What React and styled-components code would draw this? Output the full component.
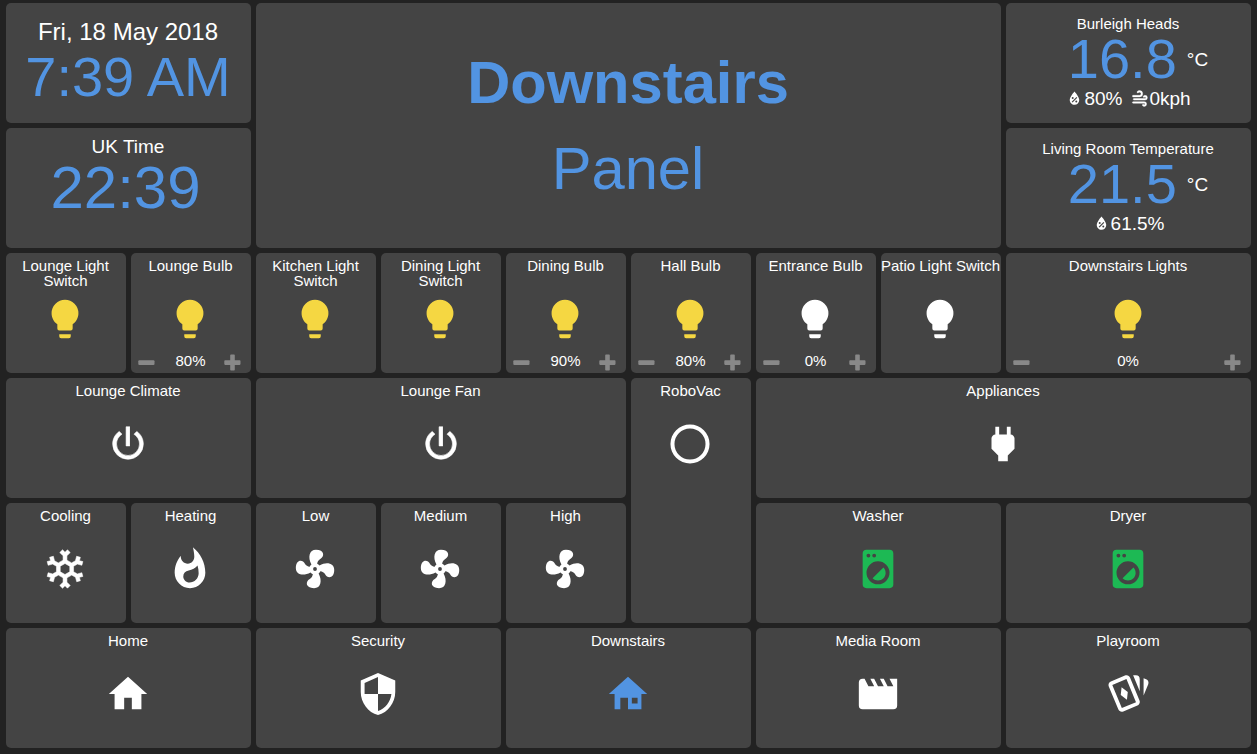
import React from "react";
import styled, { createGlobalStyle } from "styled-components";

const GlobalStyle = createGlobalStyle`
  body {
    margin: 0;
    background: #222;
    color: #fff;
    font-family: "Liberation Sans", Arial, sans-serif;
    overflow: hidden;
  }
`;

const BLUE = "#5294e2";
const YELLOW = "#f5d742";
const GREEN = "#1db954";

const PATHS = {
  bulb: "M12,2A7,7 0 0,0 5,9C5,11.38 6.19,13.47 8,14.74V17A1,1 0 0,0 9,18H15A1,1 0 0,0 16,17V14.74C17.81,13.47 19,11.38 19,9A7,7 0 0,0 12,2M9,21A1,1 0 0,0 10,22H14A1,1 0 0,0 15,21V20H9V21Z",
  power: "M16.56,5.44L15.11,6.89C16.84,7.94 18,9.83 18,12A6,6 0 0,1 12,18A6,6 0 0,1 6,12C6,9.83 7.16,7.94 8.88,6.88L7.44,5.44C5.36,6.88 4,9.28 4,12A8,8 0 0,0 12,20A8,8 0 0,0 20,12C20,9.28 18.64,6.88 16.56,5.44M13,3H11V13H13",
  circle: "M12,20.1A8.1,8.1 0 0,1 3.9,12A8.1,8.1 0 0,1 12,3.9A8.1,8.1 0 0,1 20.1,12A8.1,8.1 0 0,1 12,20.1M12,1.8A10.2,10.2 0 0,0 1.8,12A10.2,10.2 0 0,0 12,22.2A10.2,10.2 0 0,0 22.2,12A10.2,10.2 0 0,0 12,1.8Z",
  plug: "M16,7V3H14V7H10V3H8V7H8C7,7 6,8 6,9V14.5L9.5,18V21H14.5V18L18,14.5V9C18,8 17,7 16,7Z",
  snow: "M20.79,13.95L18.46,14.57L16.46,13.44V10.56L18.46,9.43L20.79,10.05L21.31,8.12L19.54,7.65L20,5.88L18.07,5.36L17.45,7.69L15.45,8.82L13,7.38V5.12L14.71,3.41L13.29,2L12,3.29L10.71,2L9.29,3.41L11,5.12V7.38L8.5,8.82L6.5,7.69L5.92,5.36L4,5.88L4.47,7.65L2.7,8.12L3.22,10.05L5.55,9.43L7.55,10.56V13.45L5.55,14.58L3.22,13.96L2.7,15.89L4.47,16.36L4,18.12L5.93,18.64L6.55,16.31L8.55,15.18L11,16.62V18.88L9.29,20.59L10.71,22L12,20.71L13.29,22L14.7,20.59L13,18.88V16.62L15.5,15.17L17.5,16.3L18.12,18.63L20,18.12L19.53,16.35L21.3,15.88L20.79,13.95M9.5,10.56L12,9.11L14.5,10.56V13.44L12,14.89L9.5,13.44V10.56Z",
  fire: "M13.5 .67s.74 2.65.74 4.8c0 2.06-1.35 3.73-3.41 3.73-2.07 0-3.63-1.67-3.63-3.73l.03-.36C5.21 7.51 4 10.62 4 14c0 4.42 3.58 8 8 8s8-3.58 8-8C20 8.61 17.41 3.8 13.5.67zM11.71 19c-1.78 0-3.22-1.4-3.22-3.14 0-1.62 1.05-2.76 2.81-3.12 1.77-.36 3.6-1.21 4.62-2.58.39 1.29.59 2.65.59 4.04 0 2.65-2.15 4.8-4.8 4.8z",
  fan: "M12,11A1,1 0 0,0 11,12A1,1 0 0,0 12,13A1,1 0 0,0 13,12A1,1 0 0,0 12,11M12.5,2C17,2 17.11,5.57 14.75,6.75C13.76,7.24 13.32,8.29 13.13,9.22C13.61,9.42 14.03,9.73 14.35,10.13C18.05,8.13 22.03,8.92 22.03,12.5C22.03,17 18.46,17.1 17.28,14.73C16.78,13.74 15.72,13.3 14.79,13.11C14.59,13.59 14.28,14 13.88,14.34C15.87,18.03 15.08,22 11.5,22C7,22 6.91,18.42 9.27,17.24C10.25,16.75 10.69,15.71 10.89,14.79C10.4,14.59 9.97,14.27 9.65,13.87C5.96,15.85 2,15.07 2,11.5C2,7 5.56,6.89 6.74,9.26C7.24,10.25 8.29,10.68 9.22,10.87C9.41,10.39 9.73,9.97 10.14,9.65C8.15,5.96 8.94,2 12.5,2Z",
  washer: "M14.83,11.17C16.39,12.73 16.39,15.26 14.83,16.83C13.26,18.39 10.73,18.39 9.17,16.83L14.83,11.17M6,2H18A2,2 0 0,1 20,4V20A2,2 0 0,1 18,22H6A2,2 0 0,1 4,20V4A2,2 0 0,1 6,2M7,4A1,1 0 0,0 6,5A1,1 0 0,0 7,6A1,1 0 0,0 8,5A1,1 0 0,0 7,4M10,4A1,1 0 0,0 9,5A1,1 0 0,0 10,6A1,1 0 0,0 11,5A1,1 0 0,0 10,4M12,8A6,6 0 0,0 6,14A6,6 0 0,0 12,20A6,6 0 0,0 18,14A6,6 0 0,0 12,8Z",
  home: "M10,20V14H14V20H19V12H22L12,3L2,12H5V20H10Z",
  homeVariant: "M8,20H5V12H2L12,3L22,12H19V20H12V14H8V20M14,14V17H17V14H14Z",
  shield: "M12,12H19C18.47,16.11 15.72,19.78 12,20.92V12H5V6.3L12,3.19M12,1L3,5V11C3,16.55 6.84,21.73 12,23C17.16,21.73 21,16.55 21,11V5L12,1Z",
  movie: "M18,4L20,8H17L15,4H13L15,8H12L10,4H8L10,8H7L5,4H4A2,2 0 0,0 2,6V18A2,2 0 0,0 4,20H20A2,2 0 0,0 22,18V4H18Z",
  cards: "M11.19,2.25C10.93,2.25 10.67,2.31 10.42,2.4L3.06,5.45C2.04,5.87 1.55,7.04 1.97,8.05L6.93,20C7.24,20.77 7.97,21.23 8.74,21.25C9,21.25 9.27,21.22 9.54,21.1L16.91,18.05C17.68,17.74 18.14,17 18.16,16.23C18.16,15.96 18.11,15.7 18,15.45L13.1,3.5C12.79,2.73 12.06,2.27 11.3,2.25H11.19M14.67,2.25L18.12,10.6V4.25A2,2 0 0,0 16.12,2.25M20.13,3.79V12.82L22.56,6.96C22.97,5.94 22.5,4.78 21.47,4.36M11.19,4.22L16.17,16.24L8.78,19.29L3.8,7.29M8.65,8.54L11.88,10.95L11.44,14.96L8.21,12.54L8.65,8.54Z",
  drop: "M12,3.25C12,3.25 6,10 6,14C6,17.32 8.69,20 12,20A6,6 0 0,0 18,14C18,10 12,3.25 12,3.25M14.47,9.97L15.53,11.03L9.53,17.03L8.47,15.97M9.75,10A1.25,1.25 0 0,1 11,11.25A1.25,1.25 0 0,1 9.75,12.5A1.25,1.25 0 0,1 8.5,11.25A1.25,1.25 0 0,1 9.75,10M14.25,14.5A1.25,1.25 0 0,1 15.5,15.75A1.25,1.25 0 0,1 14.25,17A1.25,1.25 0 0,1 13,15.75A1.25,1.25 0 0,1 14.25,14.5Z",
  wind: "M4,10A1,1 0 0,1 3,9A1,1 0 0,1 4,8H12A2,2 0 0,0 14,6A2,2 0 0,0 12,4C11.45,4 10.95,4.22 10.59,4.59C10.2,5 9.56,5 9.17,4.59C8.78,4.2 8.78,3.56 9.17,3.17C9.9,2.45 10.9,2 12,2A4,4 0 0,1 16,6A4,4 0 0,1 12,10H4M19,12A1,1 0 0,0 20,11A1,1 0 0,0 19,10C18.72,10 18.47,10.11 18.29,10.29C17.9,10.68 17.27,10.68 16.88,10.29C16.5,9.9 16.5,9.27 16.88,8.88C17.42,8.34 18.17,8 19,8A3,3 0 0,1 22,11A3,3 0 0,1 19,14H5A1,1 0 0,1 4,13A1,1 0 0,1 5,12H19M18,18H4A1,1 0 0,1 3,17A1,1 0 0,1 4,16H18A3,3 0 0,1 21,19A3,3 0 0,1 18,22C17.17,22 16.42,21.66 15.88,21.12C15.5,20.73 15.5,20.1 15.88,19.71C16.27,19.32 16.9,19.32 17.29,19.71C17.47,19.89 17.72,20 18,20A1,1 0 0,0 19,19A1,1 0 0,0 18,18Z",
};

// Thin-lined glyphs get a hairline stroke so they carry the same weight as the solid ones.
const STROKES = { power: 0.3, snow: 0.3, wind: 0.5 };

const Dashboard = styled.main`
  display: grid;
  grid-template-columns: repeat(10, 120px);
  grid-auto-rows: 120px;
  gap: 5px;
  padding: 3px 6px 6px;
  box-sizing: border-box;
  width: 1257px;
  height: 754px;
`;

const Tile = styled.section`
  grid-column: span ${(p) => p.$w || 1};
  grid-row: span ${(p) => p.$h || 1};
  display: flex;
  flex-direction: column;
  align-items: center;
  box-sizing: border-box;
  padding-top: ${(p) => p.$top ?? 5}px;
  padding-right: 1px;
  background: #444;
  border-radius: 5px;
  text-align: center;
  white-space: nowrap;
`;

const Title = styled.h2`
  flex: none;
  margin: 0;
  height: 38px;
  font-size: 15px;
  font-weight: 400;
  line-height: 15px;
  white-space: pre;
`;

const Icon = styled.svg`
  flex: none;
  display: block;
  width: 46px;
  height: 46px;
  margin-right: ${(p) => p.$shift || 0}px;
  fill: ${(p) => p.$color || "#fff"};
  stroke: ${(p) => p.$color || "#fff"};
`;

const Level = styled.div`
  display: grid;
  grid-template-columns: 1fr auto 1fr;
  align-items: center;
  align-self: stretch;
  box-sizing: border-box;
  height: 18px;
  margin-top: 11px;
  padding: 0 9px 0 7px;
`;

const LevelText = styled.span`
  margin: 0 0 3px 2px;
  font-size: 15px;
  line-height: 15px;
`;

const StepButton = styled.button`
  display: flex;
  justify-self: ${(p) => p.$side};
  padding: 0;
  border: 0;
  background: none;
  color: #888;

  svg {
    width: 17px;
    height: 17px;
    fill: currentColor;
  }
`;

const DateText = styled.div`
  font-size: 24px;
  line-height: 24px;
  margin-bottom: 5px;
`;

const ZoneText = styled.div`
  font-size: 19px;
  line-height: 19px;
  margin-bottom: 2px;
`;

const BigText = styled.div`
  color: ${BLUE};
  font-size: ${(p) => p.$size}px;
  line-height: 60px;
  line-height: ${(p) => Math.round(p.$size)}px;
  font-weight: ${(p) => (p.$bold ? 700 : 400)};
  margin-bottom: ${(p) => p.$gap || 0}px;
  margin-right: ${(p) => p.$shift || 0}px;
`;

const Place = styled.div`
  font-size: 15px;
  line-height: 15px;
`;

const Reading = styled.div`
  display: flex;
  align-items: flex-start;
  margin-left: 20px;
`;

const Unit = styled.span`
  margin: 19px 0 0 10px;
  font-size: 19px;
  line-height: 19px;
`;

const Details = styled.div`
  display: flex;
  gap: 8px;
  margin-top: 2px;
  font-size: 19px;
  line-height: 19px;
`;

const Detail = styled.span`
  display: flex;

  svg {
    width: 19px;
    height: 19px;
    fill: #fff;
    stroke: #fff;
  }
`;

function Shape({ name }) {
  return <path fillRule="evenodd" strokeWidth={STROKES[name] || 0} d={PATHS[name]} />;
}

function Control({ title, icon, color, w = 1, h, level }) {
  return (
    <Tile $w={w} $h={h}>
      <Title>{title}</Title>
      <Icon viewBox="0 0 24 24" $color={color} $shift={w === 3 ? 0 : 1}>
        <Shape name={icon} />
      </Icon>
      {level && (
        <Level>
          <StepButton $side="start" aria-label="Decrease">
            <svg viewBox="0 0 17 17">
              <rect x="0.3" y="6.3" width="16.2" height="4.6" rx="1" />
            </svg>
          </StepButton>
          <LevelText>{level}</LevelText>
          <StepButton $side="end" aria-label="Increase">
            <svg viewBox="0 0 17 17">
              <path d="M7,.5h3a.8,.8 0 0 1 .8,.8V6.3H15.7a.8,.8 0 0 1 .8,.8V10.1a.8,.8 0 0 1-.8,.8H10.8V15.7a.8,.8 0 0 1-.8,.8H7a.8,.8 0 0 1-.8-.8V10.9H1.1a.8,.8 0 0 1-.8-.8V7.1a.8,.8 0 0 1 .8-.8H6.2V1.3A.8,.8 0 0 1 7,.5Z" />
            </svg>
          </StepButton>
        </Level>
      )}
    </Tile>
  );
}

function Climate({ place, value, humidity, wind }) {
  return (
    <Tile $w={2} $top={13}>
      <Place>{place}</Place>
      <Reading>
        <BigText $size={56}>{value}</BigText>
        <Unit>°C</Unit>
      </Reading>
      <Details>
        <Detail>
          <svg viewBox="0 0 24 24"><Shape name="drop" /></svg>
          {humidity}
        </Detail>
        {wind && (
          <Detail>
            <svg viewBox="0 0 24 24"><Shape name="wind" /></svg>
            {wind}
          </Detail>
        )}
      </Details>
    </Tile>
  );
}

export default function App() {
  return (
    <>
      <GlobalStyle />
      <Dashboard>
        <Tile $w={2} $top={17}>
          <DateText>Fri, 18 May 2018</DateText>
          <BigText $size={56}>7:39 AM</BigText>
        </Tile>
        <Tile $w={6} $h={2} $top={50}>
          <BigText $size={59.7} $bold $gap={26}>Downstairs</BigText>
          <BigText $size={59.7}>Panel</BigText>
        </Tile>
        <Climate place="Burleigh Heads" value="16.8" humidity="80%" wind="0kph" />
        <Tile $w={2} $top={9}>
          <ZoneText>UK Time</ZoneText>
          <BigText $size={60} $shift={5}>22:39</BigText>
        </Tile>
        <Climate place="Living Room Temperature" value="21.5" humidity="61.5%" />

        <Control title={"Lounge Light\nSwitch"} icon="bulb" color={YELLOW} />
        <Control title="Lounge Bulb" icon="bulb" color={YELLOW} level="80%" />
        <Control title={"Kitchen Light\nSwitch"} icon="bulb" color={YELLOW} />
        <Control title={"Dining Light\nSwitch"} icon="bulb" color={YELLOW} />
        <Control title="Dining Bulb" icon="bulb" color={YELLOW} level="90%" />
        <Control title="Hall Bulb" icon="bulb" color={YELLOW} level="80%" />
        <Control title="Entrance Bulb" icon="bulb" level="0%" />
        <Control title="Patio Light Switch" icon="bulb" />
        <Control title="Downstairs Lights" icon="bulb" color={YELLOW} w={2} level="0%" />

        <Control title="Lounge Climate" icon="power" w={2} />
        <Control title="Lounge Fan" icon="power" w={3} />
        <Control title="RoboVac" icon="circle" h={2} />
        <Control title="Appliances" icon="plug" w={4} />

        <Control title="Cooling" icon="snow" />
        <Control title="Heating" icon="fire" />
        <Control title="Low" icon="fan" />
        <Control title="Medium" icon="fan" />
        <Control title="High" icon="fan" />
        <Control title="Washer" icon="washer" color={GREEN} w={2} />
        <Control title="Dryer" icon="washer" color={GREEN} w={2} />

        <Control title="Home" icon="home" w={2} />
        <Control title="Security" icon="shield" w={2} />
        <Control title="Downstairs" icon="homeVariant" color={BLUE} w={2} />
        <Control title="Media Room" icon="movie" w={2} />
        <Control title="Playroom" icon="cards" w={2} />
      </Dashboard>
    </>
  );
}
